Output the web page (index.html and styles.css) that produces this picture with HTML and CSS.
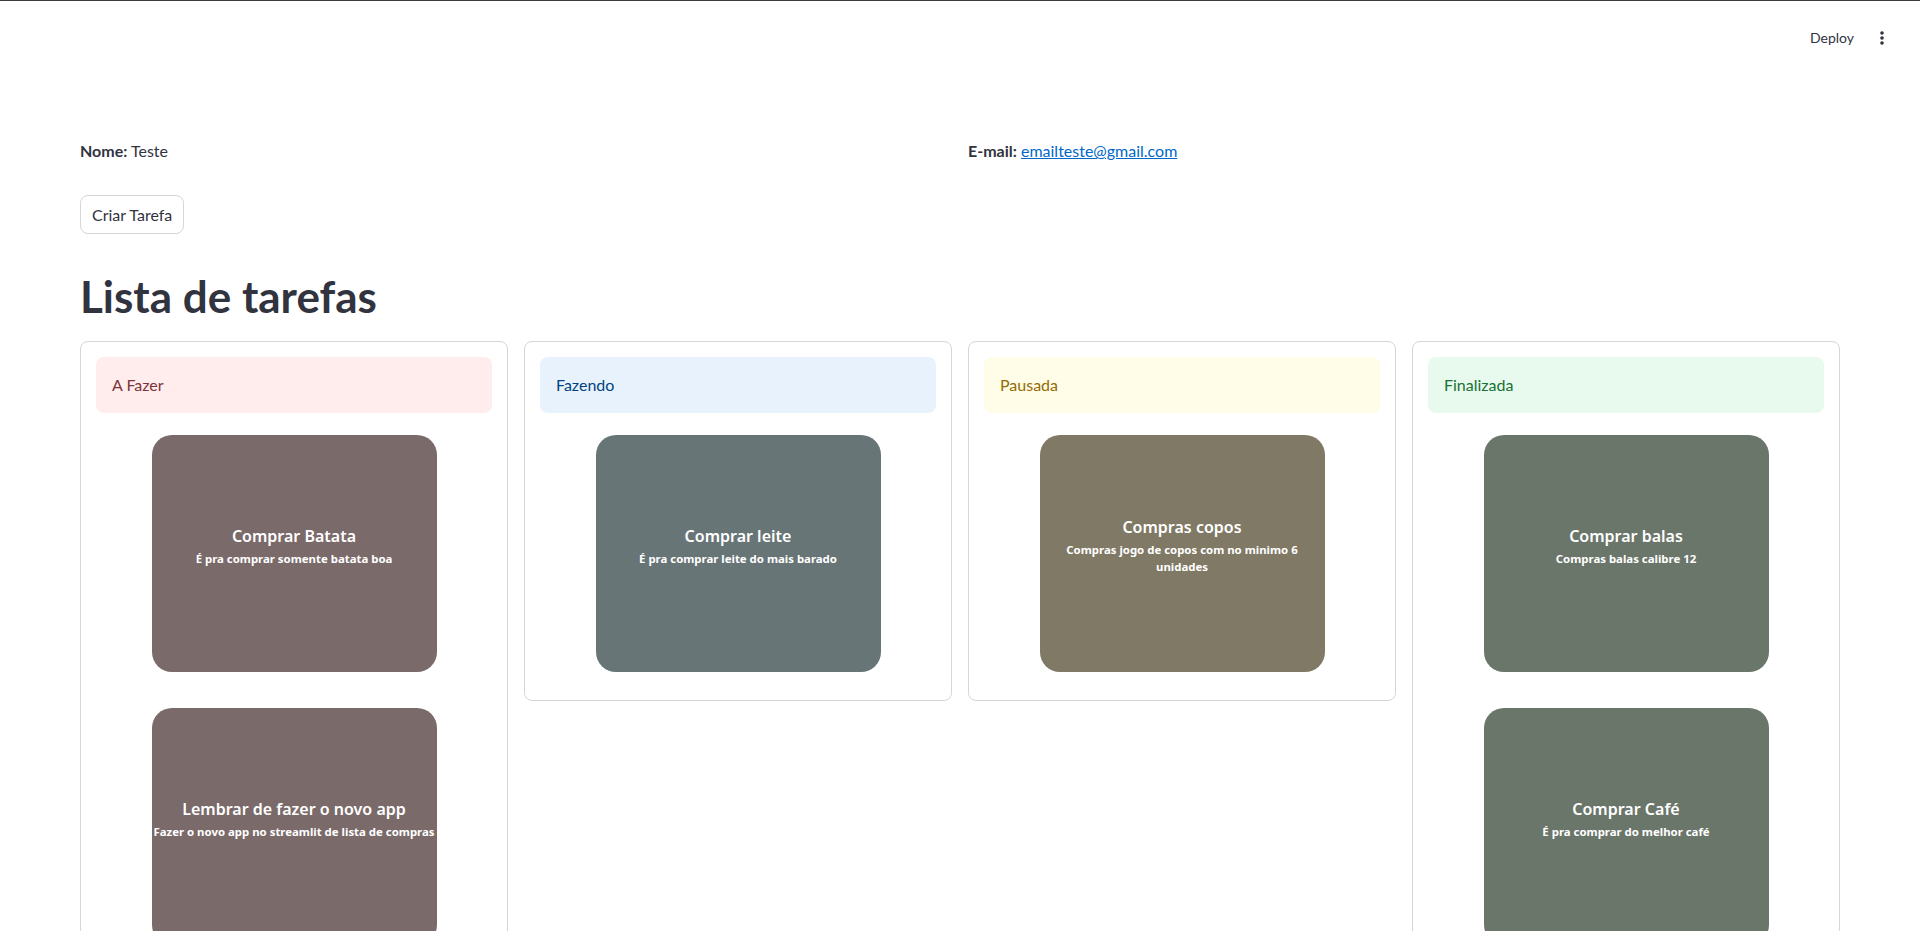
FILE: index.html
```html
<!DOCTYPE html>
<html lang="pt">
<head>
    <meta charset="UTF-8">
    <meta name="viewport" content="width=device-width, initial-scale=1.0">
    <title>Lista de tarefas</title>
    <link rel="stylesheet" href="styles.css">
</head>
<body>
    <header class="app-header">
        <button class="deploy-btn">Deploy</button>
        <button class="menu-btn" aria-label="Menu">
            <svg width="16" height="16" viewBox="0 0 16 16">
                <circle cx="8" cy="3" r="1.8" fill="#31333f"/>
                <circle cx="8" cy="8" r="1.8" fill="#31333f"/>
                <circle cx="8" cy="13" r="1.8" fill="#31333f"/>
            </svg>
        </button>
    </header>

    <main class="main">
        <div class="info-row">
            <p><strong>Nome:</strong> Teste</p>
            <p><strong>E-mail:</strong> <a href="#">emailteste@gmail.com</a></p>
        </div>

        <button class="create-btn">Criar Tarefa</button>

        <h1 class="title">Lista de tarefas</h1>

        <div class="board">
            <section class="column">
                <div class="status status-todo">A Fazer</div>
                <div class="cards">
                    <div class="card card-todo">
                        <h3>Comprar Batata</h3>
                        <p>É pra comprar somente batata boa</p>
                    </div>
                    <div class="card card-todo">
                        <h3>Lembrar de fazer o novo app</h3>
                        <p>Fazer o novo app no streamlit de lista de compras</p>
                    </div>
                </div>
            </section>

            <section class="column">
                <div class="status status-doing">Fazendo</div>
                <div class="cards">
                    <div class="card card-doing">
                        <h3>Comprar leite</h3>
                        <p>É pra comprar leite do mais barado</p>
                    </div>
                </div>
            </section>

            <section class="column">
                <div class="status status-paused">Pausada</div>
                <div class="cards">
                    <div class="card card-paused">
                        <h3>Compras copos</h3>
                        <p>Compras jogo de copos com no minimo 6 unidades</p>
                    </div>
                </div>
            </section>

            <section class="column">
                <div class="status status-done">Finalizada</div>
                <div class="cards">
                    <div class="card card-done">
                        <h3>Comprar balas</h3>
                        <p>Compras balas calibre 12</p>
                    </div>
                    <div class="card card-done">
                        <h3>Comprar Café</h3>
                        <p>É pra comprar do melhor café</p>
                    </div>
                </div>
            </section>
        </div>
    </main>
</body>
</html>
```

FILE: styles.css
```css
* {
    margin: 0;
    padding: 0;
    box-sizing: border-box;
}

body {
    font-family: 'Lato', 'Noto Sans', sans-serif;
    font-size: 16px;
    line-height: 24px;
    color: #31333f;
    background: #ffffff;
    border-top: 1px solid #3d3d3d;
}

button {
    font-family: inherit;
    background: none;
    border: none;
    color: inherit;
    cursor: pointer;
}

.app-header {
    height: 59px;
    display: flex;
    justify-content: flex-end;
    align-items: flex-start;
    padding: 25px 30px 0 0;
    gap: 20px;
}

.deploy-btn {
    font-size: 14px;
    line-height: 24px;
}

.menu-btn {
    width: 16px;
    height: 24px;
    display: flex;
    align-items: center;
}

.main {
    padding: 79px 80px 40px;
}

.info-row {
    display: grid;
    grid-template-columns: repeat(2, 1fr);
    gap: 16px;
    margin-bottom: 32px;
}

.info-row strong {
    font-weight: 700;
}

.info-row a {
    color: #0068c9;
}

.create-btn {
    height: 39px;
    padding: 0 11px;
    border: 1px solid rgba(49, 51, 63, 0.2);
    border-radius: 8px;
    font-size: 16px;
    display: block;
}

.title {
    font-size: 44px;
    font-weight: 700;
    line-height: 53px;
    margin: 36px 0 18px;
}

.board {
    display: grid;
    grid-template-columns: repeat(4, 1fr);
    gap: 16px;
    align-items: start;
}

.column {
    border: 1px solid rgba(49, 51, 63, 0.2);
    border-radius: 8px;
    padding: 15px;
}

.status {
    height: 56px;
    padding: 16px;
    border-radius: 8px;
}

.status-todo {
    background: #ffecec;
    color: #7d353b;
}

.status-doing {
    background: #e8f2fc;
    color: #004280;
}

.status-paused {
    background: #fffce7;
    color: #926c05;
}

.status-done {
    background: #e8f9ee;
    color: #177233;
}

.cards {
    display: flex;
    flex-direction: column;
    align-items: center;
    gap: 36px;
    padding: 22px 0 13px;
}

.card {
    width: 285px;
    height: 237px;
    padding: 0 1px;
    border-radius: 20px;
    display: flex;
    flex-direction: column;
    justify-content: center;
    align-items: center;
    text-align: center;
    color: #ffffff;
    font-family: 'Noto Sans', sans-serif;
}

.card h3 {
    font-size: 16px;
    font-weight: 600;
    line-height: 22px;
    margin-bottom: 3px;
}

.card p {
    font-size: 11.4px;
    font-weight: 700;
    line-height: 17px;
    margin-bottom: 16px;
}

.card-todo {
    background: #7b6a6a;
}

.card-doing {
    background: #687576;
}

.card-paused {
    background: #807965;
}

.card-done {
    background: #6b766b;
}
```
